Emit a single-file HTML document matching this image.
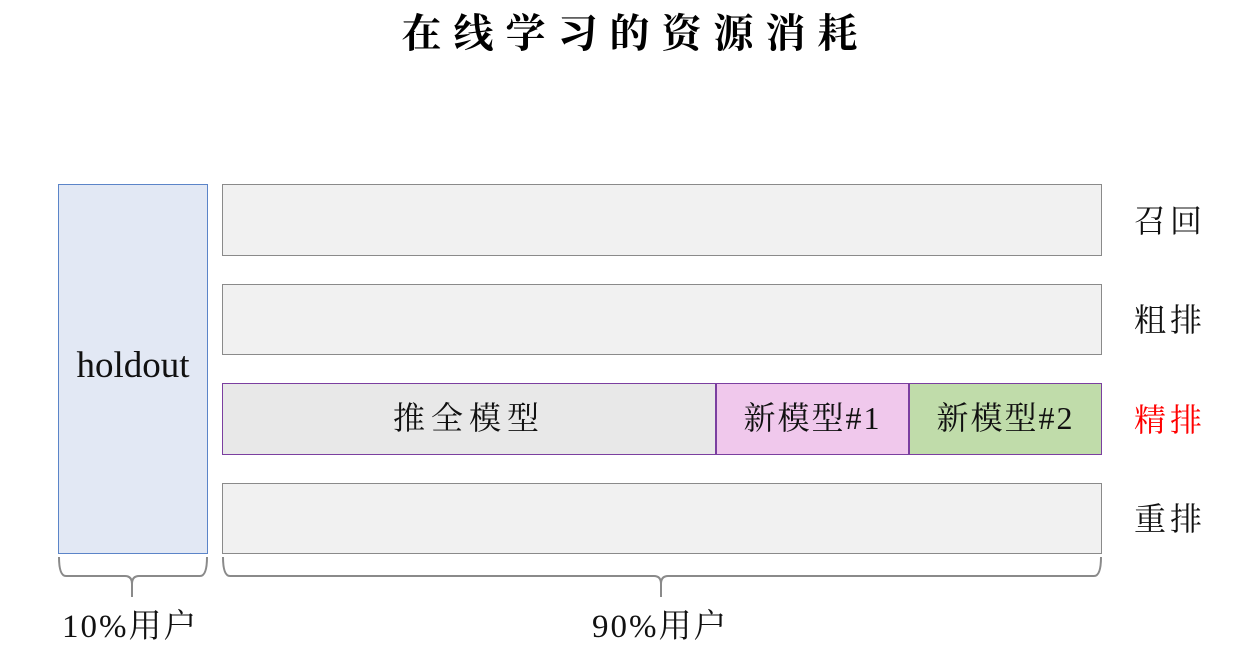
<!DOCTYPE html><html><head><meta charset="utf-8"><style>
body{margin:0;width:1259px;height:661px;background:#fff;position:relative;overflow:hidden;font-family:"Liberation Serif","Noto Serif CJK SC",serif;}
div{position:absolute;box-sizing:border-box;}
.r{left:222px;width:880px;background:#f1f1f1;border:1.5px solid #8a8a8a;}
.c{display:flex;align-items:center;justify-content:center;font-size:32px;color:#111;letter-spacing:4px;}
.l{left:1134px;font-size:32px;color:#111;letter-spacing:4px;}
</style></head><body>
<div style="left:0;width:1259px;top:2px;text-align:center;font-size:40px;font-weight:bold;letter-spacing:12px;padding-left:12px;font-family:'Noto Serif CJK SC',serif;">在线学习的资源消耗</div>
<div class="c" style="left:58px;top:184px;width:150px;height:370px;background:#e2e8f4;border:1.5px solid #5b84c8;font-size:37px;letter-spacing:0;"><span style="margin-top:-8px">holdout</span></div>
<div class="r" style="top:184px;height:72px"></div>
<div class="r" style="top:284px;height:71px"></div>
<div class="r" style="top:483px;height:71px"></div>
<div class="c" style="left:222px;top:383px;width:494px;height:72px;background:#e8e8e8;border:1.5px solid #7b3fa0;letter-spacing:6px;"><span style="margin-top:-6px">推全模型</span></div>
<div class="c" style="left:716px;top:383px;width:193px;height:72px;background:#f0c8ec;border:1.5px solid #7b3fa0;letter-spacing:2px;"><span style="margin-top:-6px">新模型#1</span></div>
<div class="c" style="left:909px;top:383px;width:193px;height:72px;background:#c0dcaa;border:1.5px solid #7b3fa0;letter-spacing:2px;"><span style="margin-top:-6px">新模型#2</span></div>
<div class="l" style="top:196px">召回</div>
<div class="l" style="top:295px">粗排</div>
<div class="l" style="top:395px;color:#f00">精排</div>
<div class="l" style="top:494px">重排</div>
<svg style="position:absolute;left:0;top:0" width="1259" height="661"><g fill="none" stroke="#8a8a8a" stroke-width="2">
<path d="M59 557 Q59 576 66 576 L125 576 Q132 576 132 584 L132 597 M132 584 Q132 576 139 576 L200 576 Q207 576 207 557"/>
<path d="M223 557 Q223 576 230 576 L654 576 Q661 576 661 584 L661 597 M661 584 Q661 576 668 576 L1094 576 Q1101 576 1101 557"/>
</g></svg>
<div style="left:62px;top:600px;font-size:33px;color:#111;letter-spacing:2px">10%用户</div>
<div style="left:592px;top:600px;font-size:33px;color:#111;letter-spacing:2px">90%用户</div>
</body></html>
